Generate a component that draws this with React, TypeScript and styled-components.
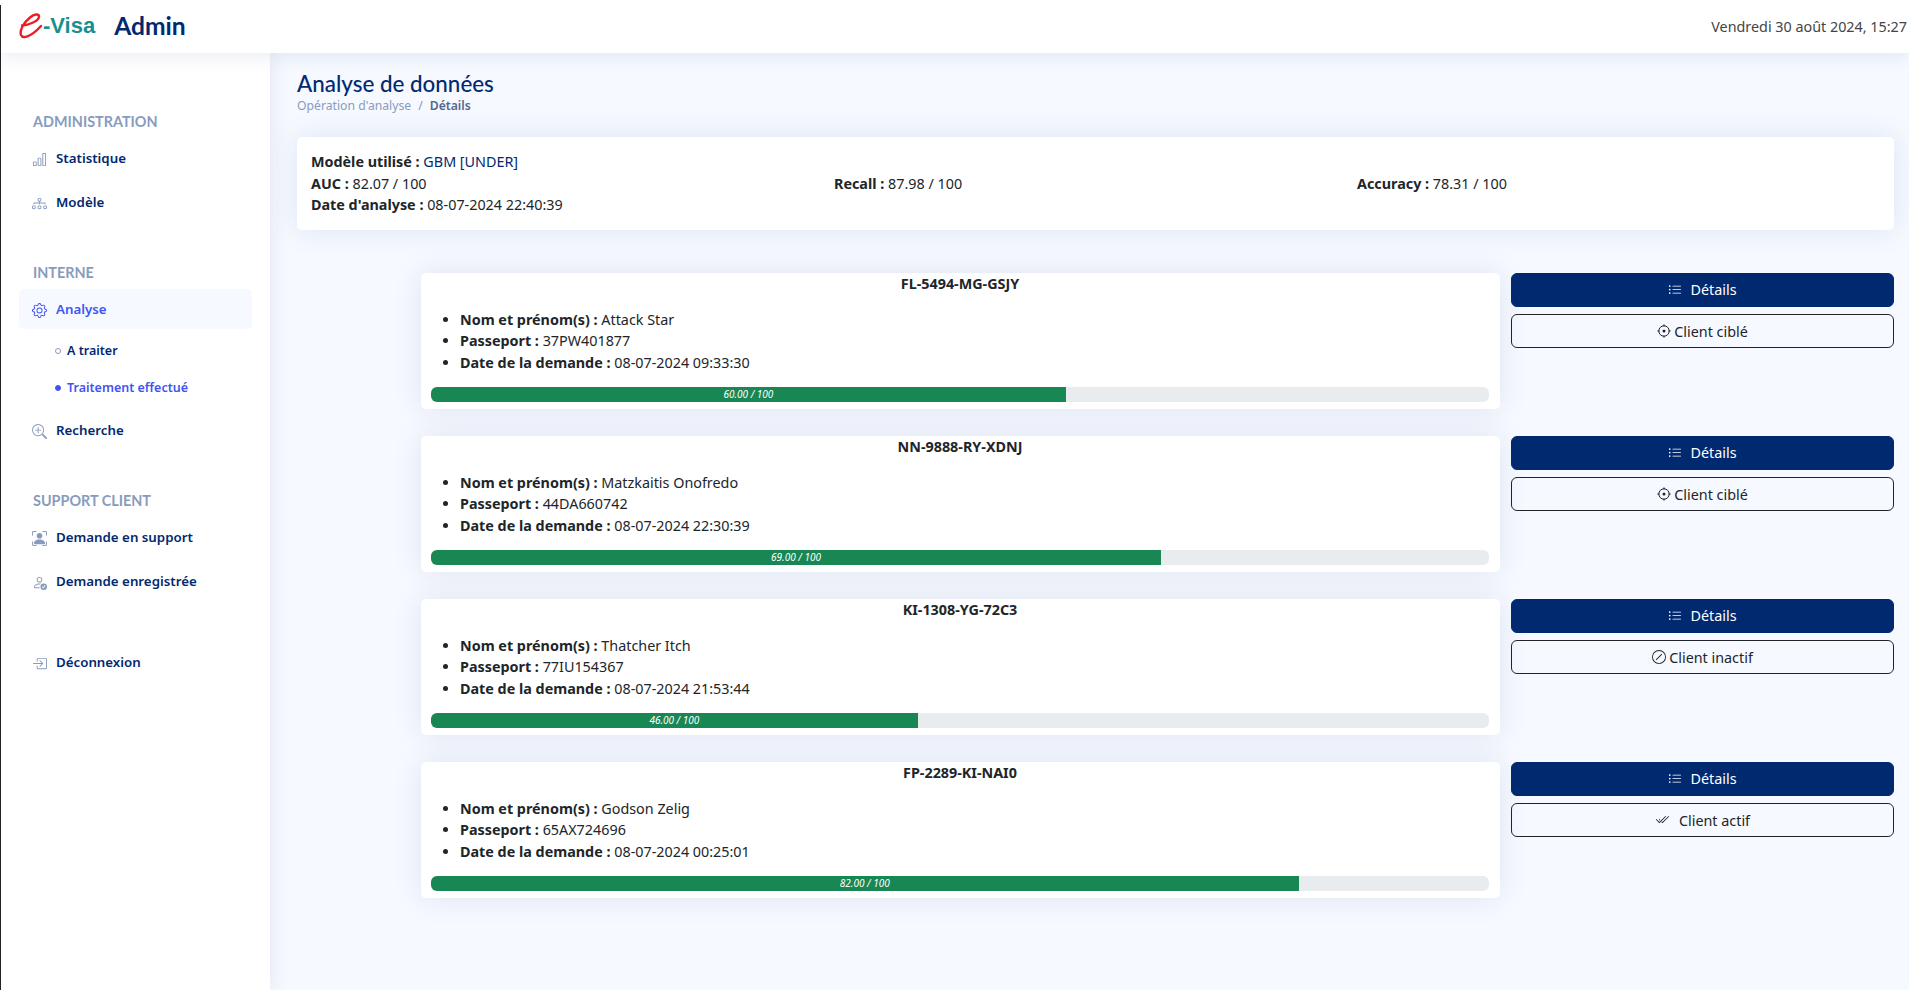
import type { ReactNode } from "react";
import styled, { createGlobalStyle } from "styled-components";
import {
  BsBarChart,
  BsBoxArrowInRight,
  BsCheck2All,
  BsDiagram3,
  BsGear,
  BsListUl,
  BsPersonBoundingBox,
  BsPersonCheck,
  BsSlashCircle,
  BsZoomIn,
} from "react-icons/bs";

const NAVY = "#012970";
const MUTED = "#899bbd";
const ACTIVE = "#4154f1";
const TEXT = "#212529";
const HEADING_FONT = `"Lato", "Noto Sans", sans-serif`;

const GlobalStyle = createGlobalStyle`
  * {
    box-sizing: border-box;
  }
  body {
    margin: 0;
    background: #f6f9ff;
    color: ${TEXT};
    font-family: "Noto Sans", sans-serif;
    font-size: 14.35px;
    line-height: 21.6px;
  }
`;

const Shell = styled.div`
  position: relative;
  display: flex;
  flex-direction: column;
  height: 990px;
  overflow: hidden;
  &::before {
    content: "";
    position: absolute;
    z-index: 5;
    left: 0;
    top: 5px;
    bottom: 0;
    width: 1px;
    background: #222;
  }
`;

const Header = styled.header`
  position: relative;
  z-index: 3;
  flex: none;
  display: flex;
  align-items: center;
  justify-content: space-between;
  height: 53px;
  padding: 0 2px 0 19px;
  background: #fff;
  box-shadow: 0 2px 20px rgba(1, 41, 112, 0.1);
`;

const Brand = styled.div`
  display: flex;
  align-items: center;
  margin-top: -1px;
`;

const LogoMark = styled.svg`
  width: 25px;
  height: 26px;
`;

const LogoText = styled.span`
  margin-left: -1px;
  color: #17908f;
  font-family: "Liberation Sans", sans-serif;
  font-size: 22px;
  font-weight: 700;
`;

const AdminText = styled.span`
  margin-left: 19px;
  color: ${NAVY};
  font-family: ${HEADING_FONT};
  font-size: 24.6px;
  font-weight: 700;
`;

const HeaderDate = styled.div`
  color: #444;
`;

const Body = styled.div`
  flex: 1;
  display: flex;
  min-height: 0;
`;

const Sidebar = styled.aside`
  position: relative;
  z-index: 2;
  flex: none;
  width: 270px;
  padding: 57px 18px 0 19px;
  background: #fff;
  box-shadow: 0 0 20px rgba(1, 41, 112, 0.1);
`;

const NavHeading = styled.div<{ $gap?: number }>`
  height: 24px;
  margin: ${(p) => p.$gap ?? 0}px 0 4px;
  padding-left: 14px;
  color: ${MUTED};
  font-family: ${HEADING_FONT};
  font-size: 14.4px;
  font-weight: 700;
  line-height: 24px;
  text-transform: uppercase;
`;

const NavItem = styled.a<{ $active?: boolean; $gap?: number }>`
  display: flex;
  align-items: center;
  gap: 9px;
  height: 40px;
  margin: ${(p) => p.$gap ?? 0}px 0 4px;
  padding: 2px 0 0 13px;
  border-radius: 5px;
  background: ${(p) => (p.$active ? "#f6f9ff" : "#fff")};
  color: ${(p) => (p.$active ? ACTIVE : NAVY)};
  font-weight: 600;
  font-size: 13.3px;
  svg {
    flex: none;
    width: 15px;
    height: 15px;
    color: ${(p) => (p.$active ? ACTIVE : MUTED)};
  }
`;

const SubList = styled.div`
  margin: -1px 0 4px;
`;

const SubItem = styled.a<{ $active?: boolean }>`
  display: flex;
  align-items: center;
  gap: 6px;
  height: 37px;
  padding-left: 36px;
  color: ${(p) => (p.$active ? ACTIVE : NAVY)};
  font-size: 12.5px;
  font-weight: 600;
`;

const SubDot = styled.i<{ $active?: boolean }>`
  width: 6px;
  height: 6px;
  border-radius: 50%;
  border: 1px solid ${(p) => (p.$active ? ACTIVE : MUTED)};
  background: ${(p) => (p.$active ? ACTIVE : "transparent")};
`;

const Main = styled.main`
  flex: 1;
  min-width: 0;
  padding: 17px 15px 0 27px;
`;

const PageTitle = styled.h1`
  margin: 0;
  color: ${NAVY};
  font-family: ${HEADING_FONT};
  font-size: 22.4px;
  font-weight: 500;
  line-height: 28px;
`;

const Breadcrumb = styled.nav`
  display: flex;
  gap: 7px;
  height: 17px;
  color: ${MUTED};
  font-size: 12.2px;
  line-height: 16px;
`;

const BreadcrumbCurrent = styled.span`
  color: #51678f;
  font-weight: 600;
`;

const InfoCard = styled.section`
  margin-top: 22px;
  padding: 14px;
  border-radius: 5px;
  background: #fff;
  box-shadow: 0 0 30px rgba(1, 41, 112, 0.1);
`;

const InfoGrid = styled.div`
  display: grid;
  grid-template-columns: repeat(3, 1fr);
`;

const ModelName = styled.span`
  color: ${NAVY};
`;

const Rows = styled.div`
  display: flex;
  flex-direction: column;
  gap: 27px;
  margin-top: 43px;
  padding-left: 124px;
`;

const Row = styled.div`
  display: grid;
  grid-template-columns: 1079px 383px;
  gap: 11px;
  align-items: start;
`;

const DemandCard = styled.article`
  height: 136px;
  padding: 0 11px 7px 10px;
  border-radius: 5px;
  background: #fff;
  box-shadow: 0 0 30px rgba(1, 41, 112, 0.1);
`;

const DemandCode = styled.div`
  font-weight: 700;
  text-align: center;
`;

const DemandList = styled.ul`
  margin: 14.4px 0 13.6px;
  padding-left: 29px;
`;

const ProgressTrack = styled.div`
  height: 15px;
  overflow: hidden;
  border-radius: 6px;
  background: #e9ecef;
`;

const ProgressFill = styled.div`
  height: 100%;
  background: #198754;
  color: #fff;
  font-size: 10px;
  font-style: italic;
  line-height: 15px;
  text-align: center;
`;

const Actions = styled.div`
  display: flex;
  flex-direction: column;
  gap: 7px;
`;

const Button = styled.button<{ $solid?: boolean }>`
  display: flex;
  align-items: center;
  justify-content: center;
  height: 34px;
  padding: ${(p) => (p.$solid ? 0 : "1px 0 0")};
  border: 1px solid ${(p) => (p.$solid ? NAVY : TEXT)};
  border-radius: 6px;
  background: ${(p) => (p.$solid ? NAVY : "transparent")};
  color: ${(p) => (p.$solid ? "#fff" : TEXT)};
  font-family: inherit;
  font-size: 14.35px;
  svg {
    flex: none;
    width: 14px;
    height: 14px;
  }
`;

const ButtonLabel = styled.span<{ $gap: number }>`
  margin-left: ${(p) => p.$gap}px;
`;

const TargetIcon = () => (
  <svg viewBox="0 0 14 14" fill="none" stroke="currentColor" strokeWidth="1">
    <circle cx="7" cy="7" r="5.2" />
    <path d="M7 .4v2M7 11.6v2M.4 7h2M11.6 7h2" />
    <circle cx="7" cy="7" r="1.5" fill="currentColor" stroke="none" />
  </svg>
);

type ClientStatus = "cible" | "inactif" | "actif";

type Demand = {
  code: string;
  name: string;
  passport: string;
  date: string;
  score: number;
  status: ClientStatus;
};

const demands: Demand[] = [
  { code: "FL-5494-MG-GSJY", name: "Attack Star", passport: "37PW401877", date: "08-07-2024 09:33:30", score: 60, status: "cible" },
  { code: "NN-9888-RY-XDNJ", name: "Matzkaitis Onofredo", passport: "44DA660742", date: "08-07-2024 22:30:39", score: 69, status: "cible" },
  { code: "KI-1308-YG-72C3", name: "Thatcher Itch", passport: "77IU154367", date: "08-07-2024 21:53:44", score: 46, status: "inactif" },
  { code: "FP-2289-KI-NAI0", name: "Godson Zelig", passport: "65AX724696", date: "08-07-2024 00:25:01", score: 82, status: "actif" },
];

const statusButtons: Record<ClientStatus, { icon: ReactNode; label: string; gap: number }> = {
  cible: { icon: <TargetIcon />, label: "Client ciblé", gap: 3 },
  inactif: { icon: <BsSlashCircle />, label: "Client inactif", gap: 3 },
  actif: { icon: <BsCheck2All />, label: "Client actif", gap: 10 },
};

const DemandRow = ({ demand }: { demand: Demand }) => {
  const status = statusButtons[demand.status];
  return (
    <Row>
      <DemandCard>
        <DemandCode>{demand.code}</DemandCode>
        <DemandList>
          <li><b>Nom et prénom(s) :</b> {demand.name}</li>
          <li><b>Passeport :</b> {demand.passport}</li>
          <li><b>Date de la demande :</b> {demand.date}</li>
        </DemandList>
        <ProgressTrack>
          <ProgressFill style={{ width: `${demand.score}%` }}>
            {demand.score.toFixed(2)} / 100
          </ProgressFill>
        </ProgressTrack>
      </DemandCard>
      <Actions>
        <Button $solid>
          <BsListUl />
          <ButtonLabel $gap={8}>Détails</ButtonLabel>
        </Button>
        <Button>
          {status.icon}
          <ButtonLabel $gap={status.gap}>{status.label}</ButtonLabel>
        </Button>
      </Actions>
    </Row>
  );
};

const App = () => (
  <Shell>
    <GlobalStyle />
    <Header>
      <Brand>
        <LogoMark viewBox="0 0 25 26" fill="none" stroke="#ee1c25" strokeLinecap="round">
          <path d="M3 12.500C10 12 20 8 20 3.500C20 .5 15 1 11 4.500C4 10 .5 18 2 22C3.500 25.500 11 25 22 13" strokeWidth="2.400" />
        </LogoMark>
        <LogoText>-Visa</LogoText>
        <AdminText>Admin</AdminText>
      </Brand>
      <HeaderDate>Vendredi 30 août 2024, 15:27</HeaderDate>
    </Header>
    <Body>
      <Sidebar>
        <NavHeading>Administration</NavHeading>
        <NavItem><BsBarChart />Statistique</NavItem>
        <NavItem><BsDiagram3 />Modèle</NavItem>
        <NavHeading $gap={39}>Interne</NavHeading>
        <NavItem $active><BsGear />Analyse</NavItem>
        <SubList>
          <SubItem><SubDot />A traiter</SubItem>
          <SubItem $active><SubDot $active />Traitement effectué</SubItem>
        </SubList>
        <NavItem><BsZoomIn />Recherche</NavItem>
        <NavHeading $gap={39}>Support client</NavHeading>
        <NavItem><BsPersonBoundingBox />Demande en support</NavItem>
        <NavItem><BsPersonCheck />Demande enregistrée</NavItem>
        <NavItem $gap={41}><BsBoxArrowInRight />Déconnexion</NavItem>
      </Sidebar>
      <Main>
        <PageTitle>Analyse de données</PageTitle>
        <Breadcrumb>
          <span>Opération d'analyse</span>
          <span>/</span>
          <BreadcrumbCurrent>Détails</BreadcrumbCurrent>
        </Breadcrumb>
        <InfoCard>
          <div><b>Modèle utilisé :</b> <ModelName>GBM [UNDER]</ModelName></div>
          <InfoGrid>
            <div><b>AUC :</b> 82.07 / 100</div>
            <div><b>Recall :</b> 87.98 / 100</div>
            <div><b>Accuracy :</b> 78.31 / 100</div>
          </InfoGrid>
          <div><b>Date d'analyse :</b> 08-07-2024 22:40:39</div>
        </InfoCard>
        <Rows>
          {demands.map((demand) => (
            <DemandRow key={demand.code} demand={demand} />
          ))}
        </Rows>
      </Main>
    </Body>
  </Shell>
);

export default App;
